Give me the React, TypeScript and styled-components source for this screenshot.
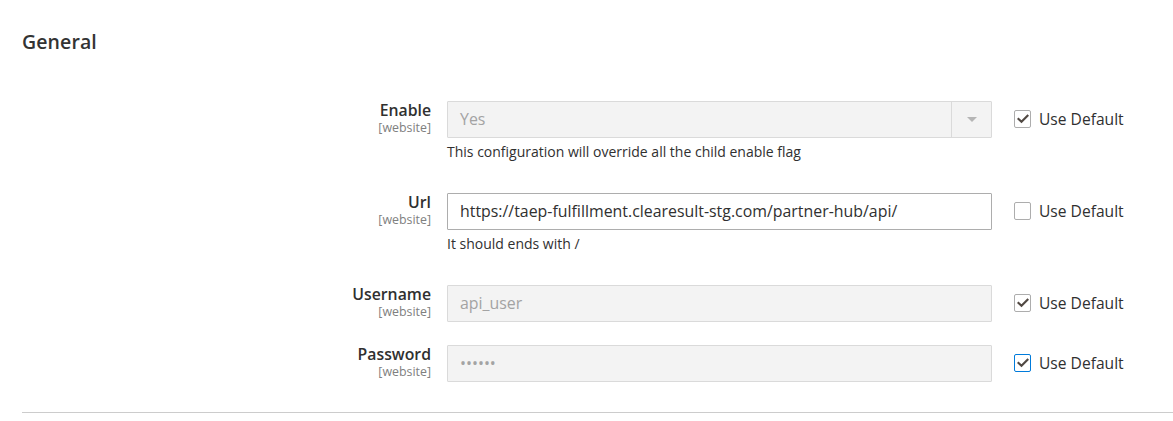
import React from "react";
import styled, { createGlobalStyle } from "styled-components";

const Global = createGlobalStyle`
  html, body { margin: 0; padding: 0; background: #fff; }
  body { font-family: "Open Sans", "Noto Sans", sans-serif; color: #303030; }
  * { box-sizing: border-box; }
`;

const Section = styled.section`
  padding: 30px 0 0 22px;
`;

const Title = styled.h2`
  margin: 0 0 47px 0;
  font-size: 19.5px;
  line-height: 24px;
  font-weight: 600;
  color: #333333;
  letter-spacing: 0.1px;
`;

const Fields = styled.div`
  display: flex;
  flex-direction: column;
  gap: 23px;
`;

const Row = styled.div`
  display: grid;
  grid-template-columns: 409px 545px auto;
  column-gap: 16px;
  align-items: start;
`;

const LabelCell = styled.div`
  display: flex;
  flex-direction: column;
  align-items: flex-end;
  text-align: right;
`;

const LabelText = styled.span`
  font-size: 15.8px;
  line-height: 19px;
  font-weight: 600;
  color: #303030;
`;

const Scope = styled.span`
  font-size: 12.4px;
  line-height: 16px;
  color: #808080;
`;

const Control = styled.div`
  display: flex;
  flex-direction: column;
`;

const TextInput = styled.input<{ $disabled?: boolean }>`
  width: 545px;
  height: 37px;
  margin: 0;
  padding: 0 12px 1px 12px;
  font-family: "Open Sans", "Noto Sans", sans-serif;
  font-size: 15.9px;
  color: ${(p) => (p.$disabled ? "#a3a3a3" : "#303030")};
  background: ${(p) => (p.$disabled ? "#f3f3f3" : "#ffffff")};
  border: 1px solid ${(p) => (p.$disabled ? "#dadada" : "#adadad")};
  border-radius: 1px;
  outline: none;
  &:disabled { opacity: 1; -webkit-text-fill-color: #a3a3a3; }
`;

const SelectBox = styled.div`
  width: 545px;
  height: 37px;
  display: flex;
  align-items: stretch;
  background: #f3f3f3;
  border: 1px solid #dadada;
  border-radius: 1px;
`;

const SelectValue = styled.span`
  flex: 1;
  display: flex;
  align-items: center;
  padding: 0 12px 1px 12px;
  font-size: 15.9px;
  color: #a3a3a3;
`;

const SelectArrow = styled.span`
  width: 40px;
  border-left: 1px solid #dadada;
  display: flex;
  align-items: center;
  justify-content: center;
  &::after {
    content: "";
    width: 0;
    height: 0;
    border-left: 5px solid transparent;
    border-right: 5px solid transparent;
    border-top: 5px solid #b5b5b5;
  }
`;

const Note = styled.div`
  margin: 5px 0 9px 0;
  font-size: 14px;
  line-height: 18px;
  color: #303030;
`;

const DefaultCell = styled.label`
  margin-left: 6px;
  height: 36px;
  display: flex;
  align-items: center;
  gap: 8px;
  font-size: 15.6px;
  color: #303030;
`;

const Box = styled.span<{ $focus?: boolean }>`
  width: 17px;
  height: 18px;
  border: 1px solid ${(p) => (p.$focus ? "#007bdb" : "#adadad")};
  border-radius: 2px;
  background: #fff;
  display: flex;
  align-items: center;
  justify-content: center;
`;

const Check = () => (
  <svg width="12" height="10" viewBox="0 0 12 10">
    <polyline
      points="1.5,5 4.5,7.8 10.5,1.8"
      fill="none"
      stroke="#514943"
      strokeWidth="2.2"
      strokeLinecap="square"
    />
  </svg>
);

const Divider = styled.hr`
  margin: 30px 0 0 0;
  border: none;
  border-top: 1px solid #cccccc;
  height: 0;
`;

const UseDefault = ({ checked, focus }: { checked: boolean; focus?: boolean }) => (
  <DefaultCell>
    <Box $focus={focus}>{checked && <Check />}</Box>
    Use Default
  </DefaultCell>
);

const Label = ({ text }: { text: string }) => (
  <LabelCell>
    <LabelText>{text}</LabelText>
    <Scope>[website]</Scope>
  </LabelCell>
);

export default function App() {
  return (
    <>
      <Global />
      <Section>
        <Title>General</Title>
        <Fields>
          <Row>
            <Label text="Enable" />
            <Control>
              <SelectBox>
                <SelectValue>Yes</SelectValue>
                <SelectArrow />
              </SelectBox>
              <Note>This configuration will override all the child enable flag</Note>
            </Control>
            <UseDefault checked />
          </Row>
          <Row>
            <Label text="Url" />
            <Control>
              <TextInput
                readOnly
                value="https://taep-fulfillment.clearesult-stg.com/partner-hub/api/"
              />
              <Note>It should ends with /</Note>
            </Control>
            <UseDefault checked={false} />
          </Row>
          <Row>
            <Label text="Username" />
            <Control>
              <TextInput $disabled disabled value="api_user" readOnly />
            </Control>
            <UseDefault checked />
          </Row>
          <Row>
            <Label text="Password" />
            <Control>
              <TextInput $disabled disabled type="password" value="123456" readOnly />
            </Control>
            <UseDefault checked focus />
          </Row>
        </Fields>
        <Divider />
      </Section>
    </>
  );
}
